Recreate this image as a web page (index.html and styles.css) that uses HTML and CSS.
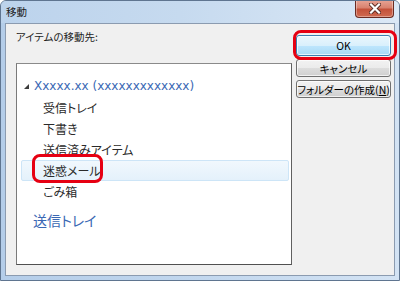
FILE: index.html
```html
<!DOCTYPE html>
<html lang="ja">
<head>
  <meta charset="UTF-8">
  <meta name="viewport" content="width=device-width, initial-scale=1.0">
  <title>移動</title>
  <link rel="stylesheet" href="styles.css">
</head>
<body>
  <!-- Move dialog -->
  <div class="window">
    <div class="titlebar">
      <span class="title">移動</span>
      <button class="close" aria-label="閉じる">
        <svg width="12" height="11" viewBox="0 0 12 11">
          <path d="M2 1.5 L10 9.5 M10 1.5 L2 9.5" stroke="#5a2a22" stroke-width="4" stroke-linecap="square"/>
          <path d="M2 1.5 L10 9.5 M10 1.5 L2 9.5" stroke="#ffffff" stroke-width="2.2" stroke-linecap="square"/>
        </svg>
      </button>
    </div>

    <div class="client">
      <div class="main">
        <div class="caption">アイテムの移動先:</div>
        <div class="tree">
          <div class="node root"><span class="twisty"></span><span class="latin">Xxxxx.xx (xxxxxxxxxxxxx)</span></div>
          <div class="node child">受信トレイ</div>
          <div class="node child">下書き</div>
          <div class="node child">送信済みアイテム</div>
          <div class="node child selected">迷惑メール</div>
          <div class="node child">ごみ箱</div>
          <div class="node root second">送信トレイ</div>
        </div>
      </div>

      <div class="actions">
        <button class="btn default">OK</button>
        <button class="btn">キャンセル</button>
        <button class="btn">フォルダーの作成(<u>N</u>)</button>
      </div>
    </div>

    <!-- red annotation marks -->
    <span class="mark mark-ok"></span>
    <span class="mark mark-item"></span>
  </div>
</body>
</html>
```

FILE: styles.css
```css
/* General */
body {
  margin: 0;
  background: #fff;
  font-family: "Noto Sans CJK JP", "Noto Sans", sans-serif;
  color: #1e1e1e;
}

.window {
  position: relative;
  box-sizing: border-box;
  width: 400px;
  height: 281px;
  display: flex;
  flex-direction: column;
  border: 1px solid #5f7590;
  border-radius: 6px 6px 0 0;
  background: linear-gradient(90deg, #b4cde9, #c2d7ee 50%, #d3e3f4);
  overflow: hidden;
}

/* Title bar */
.titlebar {
  height: 22px;
  display: flex;
  align-items: flex-start;
  justify-content: space-between;
  background: linear-gradient(90deg, #bcd3ec 0%, #c6daef 45%, #dbe8f6 100%);
}

.title {
  margin: 3px 0 0 5px;
  font-size: 10.5px;
  line-height: 16px;
  font-weight: 400;
  color: #1a1a1a;
}

.close {
  width: 39px;
  height: 18px;
  margin: -1px 5px 0 0;
  padding: 0;
  display: flex;
  align-items: center;
  justify-content: center;
  border: 1px solid #6b2b22;
  border-top: none;
  border-radius: 0 0 4px 4px;
  background: linear-gradient(180deg, #e8a596 0%, #d9826f 45%, #c4513a 55%, #cf6a50 100%);
  box-shadow: inset 0 0 0 1px rgba(255, 255, 255, 0.35);
}

/* Client area */
.client {
  flex: 1;
  margin: 0 4px 4px;
  display: flex;
  gap: 4px;
  padding: 5px 3px 0 10px;
  border: 1px solid #8b9bb0;
  background: #f0f0f0;
}

.main {
  width: 276px;
}

.caption {
  font-size: 10.5px;
  line-height: 16px;
  font-feature-settings: "palt";
}

.tree {
  box-sizing: border-box;
  height: 202px;
  margin-top: 18px;
  padding: 10px 2px 0;
  border: 1px solid;
  border-color: #8a8a8a #606060 #505050 #7a7a7a;
  background: #fff;
}

.node {
  box-sizing: border-box;
  height: 21px;
  display: flex;
  align-items: center;
  font-size: 12px;
  font-feature-settings: "palt";
  color: #2a2a2a;
  border: 1px solid transparent;
}

.node.root {
  height: 23px;
  padding-left: 4px;
  color: #3a68b4;
}

.node.root .latin {
  font-family: "DejaVu Sans", sans-serif;
  font-size: 12px;
}

.twisty {
  width: 0;
  height: 0;
  margin-right: 5px;
  margin-top: 2px;
  border-left: 5px solid transparent;
  border-bottom: 5px solid #3c3c3c;
}

.node.child {
  padding-left: 23px;
}

.node.selected {
  margin-left: 2px;
  padding-left: 21px;
  border-color: #cde5f7;
  border-radius: 2px;
  background: linear-gradient(180deg, #f1f8fd, #e4f1fb);
}

.node.second {
  margin-top: 6px;
  height: 24px;
  padding-left: 13px;
  font-size: 14px;
}

/* Buttons */
.actions {
  width: 95px;
  margin-top: 6px;
  display: flex;
  flex-direction: column;
  gap: 3px;
}

.btn {
  box-sizing: border-box;
  height: 18px;
  padding: 0;
  font-family: "Noto Sans CJK JP", sans-serif;
  font-size: 10.5px;
  font-weight: 400;
  font-feature-settings: "palt";
  color: #000;
  border: 1px solid #707070;
  border-radius: 3px;
  background: linear-gradient(180deg, #f2f2f2 0%, #ebebeb 50%, #dddddd 51%, #cfcfcf 100%);
  box-shadow: inset 0 0 0 1px rgba(255, 255, 255, 0.7);
}

.btn.default {
  height: 21px;
  border-color: #3c7fb1;
  background: linear-gradient(180deg, #eaf6fd 0%, #d9f0fc 50%, #bee6fd 51%, #a7d9f5 100%);
}

.btn u {
  text-decoration: underline;
}

/* Red annotation marks */
.mark {
  position: absolute;
  box-sizing: border-box;
  border: 3px solid #e60012;
  border-radius: 8px;
}

.mark-ok {
  left: 292px;
  top: 29px;
  width: 104px;
  height: 30px;
}

.mark-item {
  left: 31px;
  top: 153px;
  width: 71px;
  height: 29px;
}
```
